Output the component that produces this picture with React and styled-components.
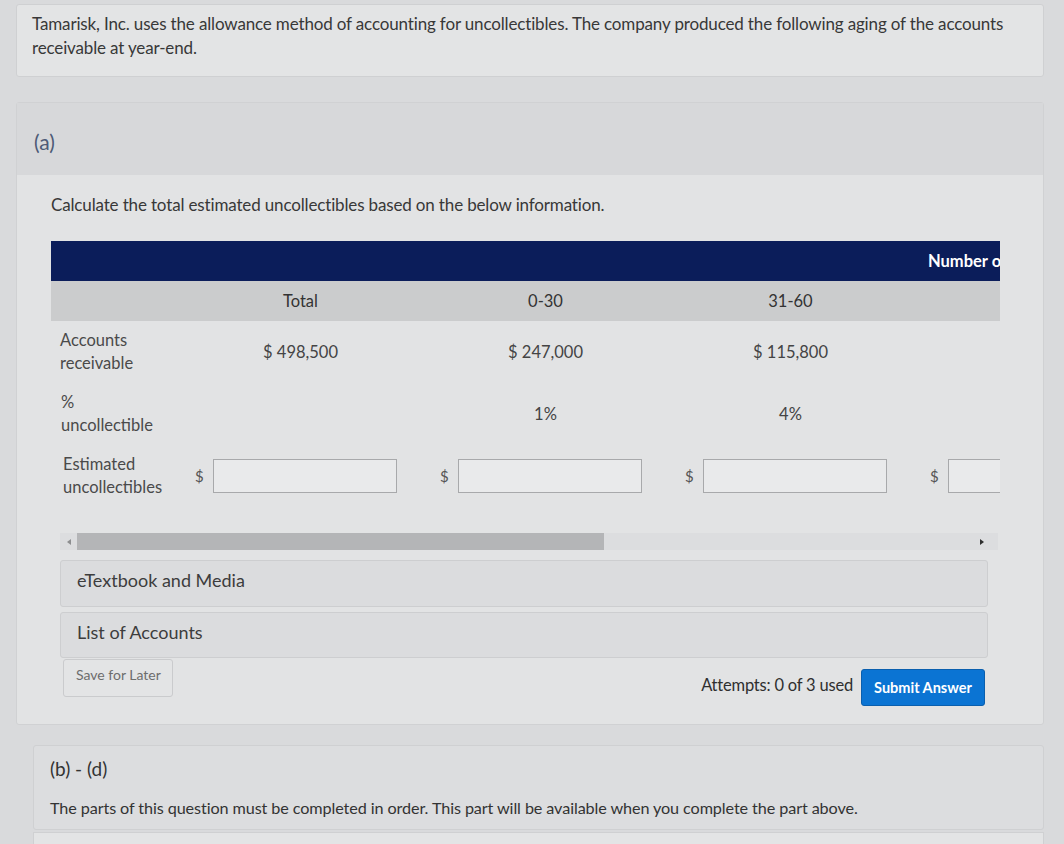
import React from 'react';
import styled, { createGlobalStyle } from 'styled-components';

const GlobalStyle = createGlobalStyle`
  html, body {
    margin: 0;
    padding: 0;
    background: #d9dadc;
    font-family: Lato, "Open Sans", "Liberation Sans", sans-serif;
    color: #383838;
  }
`

const Page = styled.div`
  width: 1028px;
  padding: 4px 0 0 16px;
`

const IntroCard = styled.div`
  background: #e3e4e5;
  border: 1px solid #cfd0d2;
  border-radius: 3px;
  padding: 7px 15px 16px;
  font-size: 17px;
  line-height: 24px;
  letter-spacing: -0.15px;
`

const PartCard = styled.div`
  margin-top: 25px;
  background: #e2e3e4;
  border: 1px solid #d0d1d3;
  border-radius: 3px;
`

const PartHeader = styled.div`
  background: #d7d8da;
  height: 72px;
  box-sizing: border-box;
  padding: 27px 17px 0;
  font-size: 21px;
  line-height: 24px;
  color: #4d5a76;
`

const PartBody = styled.div`
  padding: 19px 37px 18px 34px;
`

const Prompt = styled.div`
  font-size: 17px;
  line-height: 22px;
  letter-spacing: -0.15px;
`

const TableWrap = styled.div`
  margin-top: 25px;
  width: 949px;
  overflow: hidden;
`

const Row = styled.div`
  display: grid;
  grid-template-columns: 127px repeat(4, 245px);
  width: 1107px;
  height: ${({ h }) => h}px;
  align-items: center;
  background: ${({ bg }) => bg || 'transparent'};
`

const NavyCell = styled.div`
  grid-column: 5 / 6;
  padding-left: 15px;
  color: #ffffff;
  font-weight: 700;
  font-size: 16.5px;
  white-space: nowrap;
`

const HeadCell = styled.div`
  text-align: center;
  font-size: 16.5px;
  color: #333;
`

const Label = styled.div`
  padding-left: ${({ pl }) => pl || 9}px;
  font-size: 16.5px;
  line-height: 23px;
  color: #4a4a4a;
`

const Value = styled.div`
  text-align: center;
  font-size: 16.5px;
  color: #444;
`

const InputCell = styled.div`
  display: flex;
  align-items: center;
  gap: 9px;
  padding-left: 17px;
  font-size: 15px;
  color: #555;
`

const AmountBox = styled.div`
  width: 184px;
  height: 34px;
  box-sizing: border-box;
  background: #e9eaeb;
  border: 1px solid #a8a9ab;
`

const ScrollBar = styled.div`
  margin: 26px 0 0 9px;
  width: 938px;
  height: 17px;
  background: #dcdddf;
  display: flex;
  align-items: center;
`

const Arrow = styled.div`
  width: 0;
  height: 0;
  border-top: 3px solid transparent;
  border-bottom: 3px solid transparent;
  ${({ dir }) => dir === 'left'
    ? 'border-right: 4px solid #8d8e90; margin: 0 6px 0 7px;'
    : 'border-left: 4px solid #2e2e2e; margin-left: auto; margin-right: 14px;'}
`

const Thumb = styled.div`
  width: 527px;
  height: 17px;
  background: #b4b5b7;
`

const LinkBox = styled.div`
  margin: ${({ mt }) => mt}px 0 0 9px;
  width: 928px;
  height: ${({ h }) => h}px;
  box-sizing: border-box;
  background: #dbdcde;
  border: 1px solid #cdced0;
  border-radius: 3px;
  padding: 7px 0 0 16px;
  font-size: 18px;
  line-height: 24px;
  color: #3d3d3d;
`

const Footer = styled.div`
  display: flex;
  align-items: flex-start;
  margin: 1px 0 0 12px;
  width: 922px;
`

const SaveButton = styled.button`
  height: 38px;
  width: 110px;
  background: #e3e4e5;
  border: 1px solid #cacbcd;
  border-radius: 3px;
  font-family: inherit;
  font-size: 14px;
  color: #6d6d6d;
  text-align: left;
  padding: 0 0 8px 12px;
`

const Attempts = styled.div`
  margin: 16px 8px 0 auto;
  font-size: 16.5px;
  letter-spacing: -0.2px;
  color: #2f2f2f;
`

const SubmitButton = styled.button`
  margin-top: 10px;
  height: 37px;
  width: 124px;
  background: #0b74d3;
  border: 1px solid #0a5fae;
  border-radius: 3px;
  font-family: inherit;
  font-size: 14.5px;
  font-weight: 700;
  color: #ffffff;
`

const NextCard = styled.div`
  margin: 20px 0 0 17px;
  background: #dcdddf;
  border: 1px solid #cfd0d2;
  border-radius: 3px;
  padding: 11px 16px 10px;
`

const NextTitle = styled.div`
  font-size: 19px;
  line-height: 24px;
  color: #333;
`

const NextText = styled.div`
  margin-top: 16px;
  font-size: 16.2px;
  line-height: 22px;
  letter-spacing: -0.1px;
  color: #333;
`

const Below = styled.div`
  margin: 2px 0 0 17px;
  height: 40px;
  background: #e3e4e5;
  border: 1px solid #cfd0d2;
`

const columns = ['Total', '0-30', '31-60']
const amounts = ['$ 498,500', '$ 247,000', '$ 115,800']
const rates = ['', '1%', '4%']

export default function App() {
  return (
    <Page>
      <GlobalStyle />
      <IntroCard>
        Tamarisk, Inc. uses the allowance method of accounting for uncollectibles. The company produced the following aging of the accounts
        receivable at year-end.
      </IntroCard>

      <PartCard>
        <PartHeader>(a)</PartHeader>
        <PartBody>
          <Prompt>Calculate the total estimated uncollectibles based on the below information.</Prompt>

          <TableWrap>
            <Row h={40} bg="#0b1d5a">
              <NavyCell>Number of Days Unpaid</NavyCell>
            </Row>
            <Row h={40} bg="#cbcccd">
              <div />
              {columns.map(c => <HeadCell key={c}>{c}</HeadCell>)}
            </Row>
            <Row h={62}>
              <Label>Accounts<br />receivable</Label>
              {amounts.map(a => <Value key={a}>{a}</Value>)}
            </Row>
            <Row h={62}>
              <Label pl={10}>%<br />uncollectible</Label>
              {rates.map((r, i) => <Value key={i}>{r}</Value>)}
            </Row>
            <Row h={62}>
              <Label pl={12}>Estimated<br />uncollectibles</Label>
              {[0, 1, 2, 3].map(i => (
                <InputCell key={i}>
                  $
                  <AmountBox />
                </InputCell>
              ))}
            </Row>
          </TableWrap>

          <ScrollBar>
            <Arrow dir="left" />
            <Thumb />
            <Arrow dir="right" />
          </ScrollBar>

          <LinkBox mt={10} h={47}>eTextbook and Media</LinkBox>
          <LinkBox mt={5} h={46}>List of Accounts</LinkBox>

          <Footer>
            <SaveButton>Save for Later</SaveButton>
            <Attempts>Attempts: 0 of 3 used</Attempts>
            <SubmitButton>Submit Answer</SubmitButton>
          </Footer>
        </PartBody>
      </PartCard>

      <NextCard>
        <NextTitle>(b) - (d)</NextTitle>
        <NextText>The parts of this question must be completed in order. This part will be available when you complete the part above.</NextText>
      </NextCard>
      <Below />
    </Page>
  )
}
